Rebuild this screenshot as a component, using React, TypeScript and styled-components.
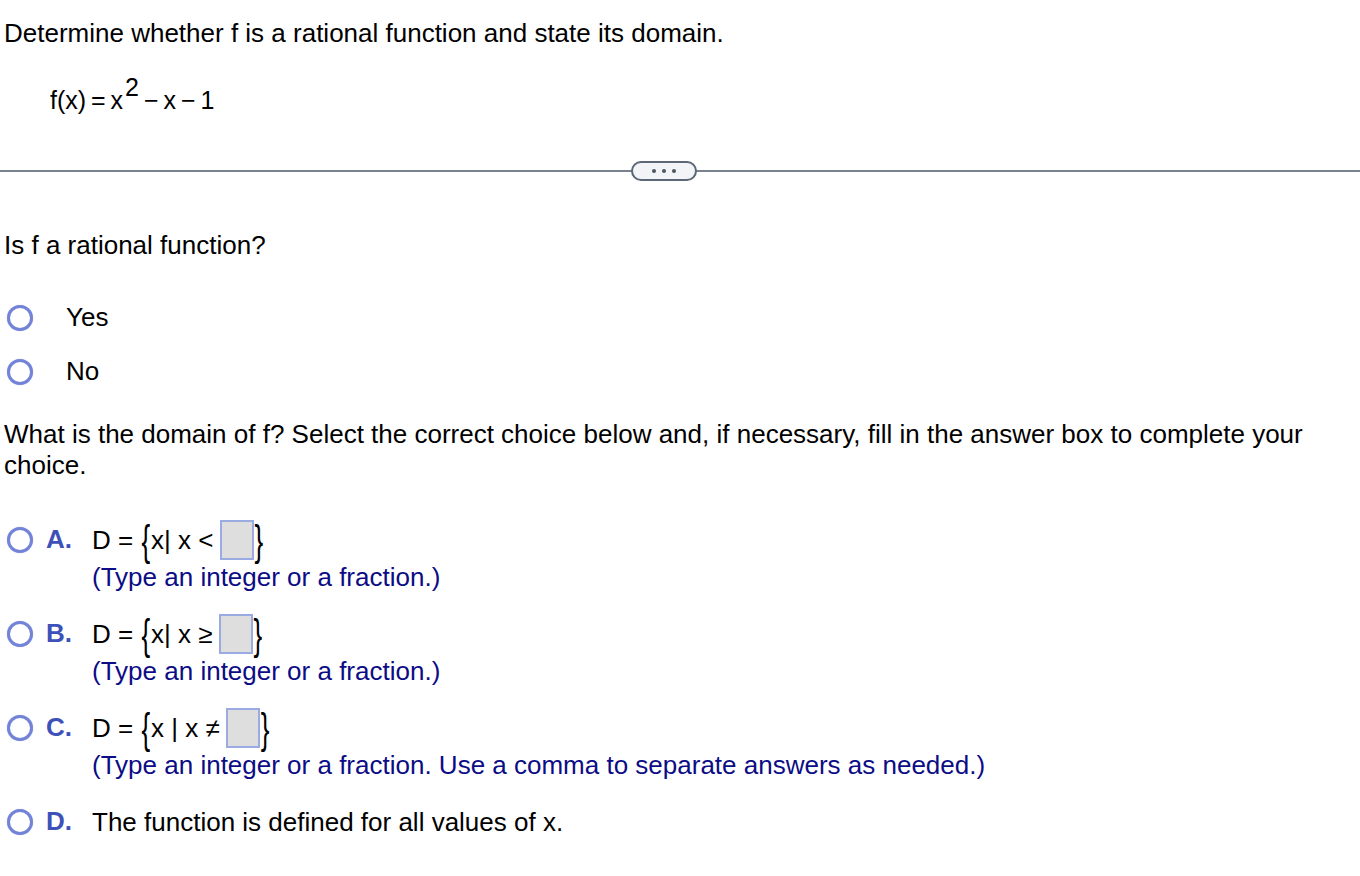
import React from "react";
import styled, { createGlobalStyle } from "styled-components";

const Global = createGlobalStyle`
  html, body {
    margin: 0;
    background: #ffffff;
  }
  body {
    font-family: "Liberation Sans", Arial, sans-serif;
    font-size: 26px;
    color: #000000;
  }
`;

const Page = styled.div`
  padding: 18px 0 40px 0;
`;

const Para = styled.p<{ $top?: number }>`
  margin: ${({ $top }) => $top ?? 0}px 0 0 4px;
  line-height: 31px;
  padding-right: 40px;
`;

const Formula = styled.div`
  margin: 36px 0 0 50px;
  line-height: 31px;
  font-size: 25px;
  word-spacing: -2px;
`;

const Sup = styled.span`
  position: relative;
  top: -13px;
  margin: 0 5px 0 2px;
`;

const Divider = styled.div`
  margin-top: 54px;
  height: 2px;
  background: #7a8290;
  display: flex;
  justify-content: center;
  align-items: center;
`;

const Pill = styled.button`
  width: 66px;
  height: 20px;
  margin-left: -33px;
  border: 2px solid #5b6676;
  border-radius: 10px;
  background: #f2f4f7;
  display: flex;
  align-items: center;
  justify-content: center;
  gap: 6px;
  padding: 0;
`;

const Dot = styled.span`
  width: 4px;
  height: 4px;
  border-radius: 50%;
  background: #4b5563;
`;

const Radio = styled.span`
  width: 26px;
  height: 26px;
  box-sizing: border-box;
  border-radius: 50%;
  border: 3px solid #7384d8;
  box-shadow: 0 0 1px rgba(115, 132, 216, 0.6);
  background: #fff;
  flex: none;
`;

const YesNoList = styled.div`
  margin-top: 41px;
  display: flex;
  flex-direction: column;
  gap: 23px;
`;

const YesNoRow = styled.label`
  display: flex;
  align-items: center;
  gap: 33px;
  padding-left: 7px;
  line-height: 31px;
`;

const ChoiceList = styled.div`
  margin-top: 37px;
  display: flex;
  flex-direction: column;
  gap: 19px;
`;

const Choice = styled.div`
  display: grid;
  grid-template-columns: 39px 46px 1fr;
  padding-left: 7px;
  align-items: start;
`;

const RadioCell = styled.div`
  height: 44px;
  display: flex;
  align-items: center;
`;

const Letter = styled.span`
  font-weight: bold;
  color: #3d51b8;
  height: 44px;
  display: flex;
  align-items: center;
  margin-top: -1px;
`;

const Body = styled.div`
  display: flex;
  flex-direction: column;
`;

const MathLine = styled.div`
  height: 44px;
  display: flex;
  align-items: center;
  white-space: pre;
`;

const Brace = styled.span`
  display: inline-block;
  transform: scaleY(1.65);
  margin: 0 1px;
`;

const AnswerBox = styled.span`
  display: inline-block;
  width: 34px;
  height: 40px;
  box-sizing: border-box;
  background: #dedede;
  border: 2px solid #9aaae2;
  margin-left: 6px;
`;

const Hint = styled.div`
  color: #0c0c86;
  line-height: 31px;
`;

type Opt = {
  letter: string;
  set?: string;
  rel?: string;
  text?: string;
  hint?: string;
};

const options: Opt[] = [
  { letter: "A.", set: "x| x", rel: "<", hint: "(Type an integer or a fraction.)" },
  { letter: "B.", set: "x| x", rel: "\u2265", hint: "(Type an integer or a fraction.)" },
  {
    letter: "C.",
    set: "x | x",
    rel: "\u2260",
    hint: "(Type an integer or a fraction. Use a comma to separate answers as needed.)",
  },
  { letter: "D.", text: "The function is defined for all values of x." },
];

export default function App() {
  return (
    <Page>
      <Global />
      <Para>Determine whether f is a rational function and state its domain.</Para>
      <Formula>
        f(x) = x<Sup>2</Sup>
        {"\u2212"} x {"\u2212"} 1
      </Formula>
      <Divider>
        <Pill aria-label="more">
          <Dot />
          <Dot />
          <Dot />
        </Pill>
      </Divider>
      <Para $top={58}>Is f a rational function?</Para>
      <YesNoList>
        <YesNoRow>
          <Radio />
          Yes
        </YesNoRow>
        <YesNoRow>
          <Radio />
          No
        </YesNoRow>
      </YesNoList>
      <Para $top={32}>
        What is the domain of f? Select the correct choice below and, if necessary, fill in the answer box to
        complete your choice.
      </Para>
      <ChoiceList>
        {options.map((o) => (
          <Choice key={o.letter}>
            <RadioCell>
              <Radio />
            </RadioCell>
            <Letter>{o.letter}</Letter>
            <Body>
              {o.text ? (
                <MathLine>{o.text}</MathLine>
              ) : (
                <>
                  <MathLine>
                    D = <Brace>{"{"}</Brace>
                    {o.set} {o.rel}
                    <AnswerBox />
                    <Brace>{"}"}</Brace>
                  </MathLine>
                  <Hint>{o.hint}</Hint>
                </>
              )}
            </Body>
          </Choice>
        ))}
      </ChoiceList>
    </Page>
  );
}
